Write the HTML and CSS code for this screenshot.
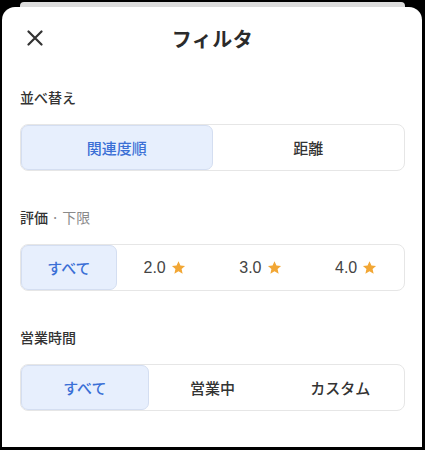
FILE: index.html
```html
<!DOCTYPE html>
<html lang="ja">

<head>
    <meta charset="UTF-8">
    <meta name="viewport" content="width=device-width, initial-scale=1.0">
    <title>フィルタ</title>
    <link rel="stylesheet" href="styles.css">
</head>

<body>
    <div class="backdrop"></div>

    <div class="sheet">
        <!-- Header -->
        <div class="header">
            <button class="close" aria-label="閉じる">
                <svg width="16" height="16" viewBox="0 0 16 16">
                    <path d="M1.5 1.5 L14.5 14.5 M14.5 1.5 L1.5 14.5" stroke="#333" stroke-width="2.2" stroke-linecap="round" fill="none"/>
                </svg>
            </button>
            <h1>フィルタ</h1>
            <div></div>
        </div>

        <!-- Sort -->
        <div class="section">
            <h2>並べ替え</h2>
            <div class="seg seg-2">
                <button class="active">関連度順</button>
                <button>距離</button>
            </div>
        </div>

        <!-- Rating -->
        <div class="section">
            <h2>評価 <span class="sub">· 下限</span></h2>
            <div class="seg seg-4">
                <button class="active">すべて</button>
                <button class="num">2.0 <svg class="star" viewBox="0 0 24 24"><path d="M12 1.8l3.1 6.9 7.4.7-5.6 5 1.7 7.4L12 17.9l-6.6 3.9 1.7-7.4-5.6-5 7.4-.7z"/></svg></button>
                <button class="num">3.0 <svg class="star" viewBox="0 0 24 24"><path d="M12 1.8l3.1 6.9 7.4.7-5.6 5 1.7 7.4L12 17.9l-6.6 3.9 1.7-7.4-5.6-5 7.4-.7z"/></svg></button>
                <button class="num">4.0 <svg class="star" viewBox="0 0 24 24"><path d="M12 1.8l3.1 6.9 7.4.7-5.6 5 1.7 7.4L12 17.9l-6.6 3.9 1.7-7.4-5.6-5 7.4-.7z"/></svg></button>
            </div>
        </div>

        <!-- Opening hours -->
        <div class="section">
            <h2>営業時間</h2>
            <div class="seg seg-3">
                <button class="active">すべて</button>
                <button>営業中</button>
                <button>カスタム</button>
            </div>
        </div>
    </div>
</body>

</html>
```

FILE: styles.css
```css
body {
    margin: 0;
    height: 450px;
    background-color: #000;
    font-family: "Noto Sans CJK JP", "Noto Sans", sans-serif;
    color: #333;
    display: flex;
    flex-direction: column;
    overflow: hidden;
}

.backdrop {
    margin: 2px 20px 0 20px;
    height: 5px;
    background-color: #dcdcdc;
    border-radius: 4px 4px 0 0;
}

.sheet {
    flex: 1;
    margin: 0 3px 3px 2px;
    padding: 0 17px 0 18px;
    background-color: #fff;
    border-radius: 13px 13px 0 0;
}

.header {
    height: 62px;
    display: grid;
    grid-template-columns: 1fr auto 1fr;
    align-items: center;
}

.header .close {
    width: 26px;
    height: 26px;
    padding: 0;
    margin-left: 2px;
    border: none;
    background: none;
    display: flex;
    align-items: center;
    justify-content: center;
}

.header h1 {
    margin: 0;
    font-size: 20px;
    font-weight: 700;
    color: #2b2b2b;
    letter-spacing: 0.5px;
}

.section {
    margin-top: 18px;
}

.section + .section {
    margin-top: 36px;
}

.section h2 {
    margin: 0 0 17px 0;
    font-size: 14px;
    line-height: 20px;
    font-weight: 500;
    color: #333;
}

.section h2 .sub {
    font-weight: 400;
    color: #8a8a8a;
}

.seg {
    display: grid;
    height: 47px;
    box-sizing: border-box;
    border: 1px solid #e6e6e6;
    border-radius: 8px;
}

.seg-2 { grid-template-columns: repeat(2, 1fr); }
.seg-3 { grid-template-columns: repeat(3, 1fr); }
.seg-4 { grid-template-columns: repeat(4, 1fr); }

.seg button {
    border: 1px solid transparent;
    border-radius: 7px;
    background: none;
    padding: 0;
    font-family: inherit;
    font-size: 15px;
    font-weight: 500;
    color: #333;
    display: flex;
    align-items: center;
    justify-content: center;
    gap: 5px;
}

.seg button.active {
    background-color: #e7effd;
    border-color: #d4def1;
    color: #3b6fd6;
}

.seg button.num {
    font-family: "Liberation Sans", "Noto Sans", sans-serif;
    font-size: 16px;
    font-weight: 400;
    color: #444;
}

.star {
    width: 15px;
    height: 15px;
    fill: #f2a735;
}
```
